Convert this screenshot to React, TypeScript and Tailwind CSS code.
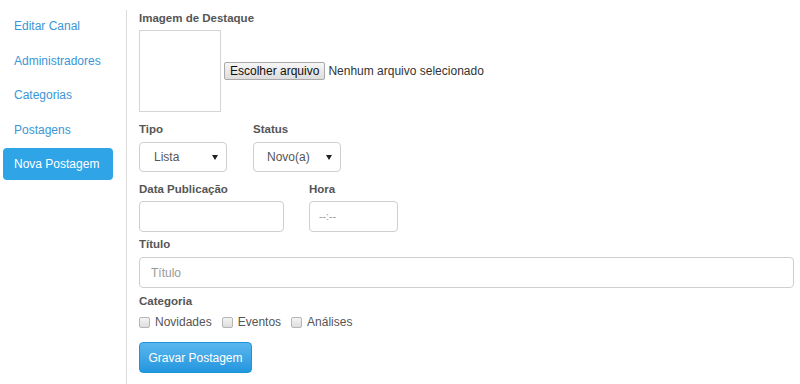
import React from "react";

const links = ["Editar Canal", "Administradores", "Categorias", "Postagens", "Nova Postagem"];

function Caret() {
    return (
        <svg width="6" height="5" viewBox="0 0 6 5" className="ml-auto">
            <path d="M0 0 L6 0 L3 5 Z" fill="#222" />
        </svg>
    );
}

function Label({ children, className = "" }: { children: React.ReactNode; className?: string }) {
    return <div className={`text-[11.5px] leading-[14px] font-bold text-[#555] ${className}`}>{children}</div>;
}

function Check({ label }: { label: string }) {
    return (
        <div className="flex items-center mr-[10px]">
            <span className="w-[11px] h-[11px] rounded-[2px] border border-[#b5b5b5] bg-gradient-to-b from-[#f4f4f4] to-[#dedede]" />
            <span className="ml-[5px] text-[12px] text-[#555]">{label}</span>
        </div>
    );
}

export default function App() {
    return (
        <div className="flex w-[800px] h-[384px] bg-white overflow-hidden" style={{ fontFamily: '"Liberation Sans", Arial, sans-serif' }}>
            <div className="w-[126px] shrink-0 pt-[10px]">
                <div className="ml-[3px] w-[110px] flex flex-col gap-[2.5px]">
                    {links.map((l, i) => (
                        <div
                            key={`nav-${i}`}
                            className={`h-[32px] flex items-center pl-[11px] text-[12px] rounded-[4px] ${i === 4 ? "bg-[#2fa4e7] text-white" : "text-[#3a96d6]"}`}
                        >
                            {l}
                        </div>
                    ))}
                </div>
            </div>
            <div className="w-px bg-[#dcdcdc] mt-[10px] shrink-0" />
            <div className="pl-[12px] pt-[11px] flex-1 pr-[6px]">
                <Label className="mb-[5px]">Imagem de Destaque</Label>
                <div className="flex items-center">
                    <div className="w-[82px] h-[82px] border border-[#d4d4d4]" />
                    <div className="ml-[3px] h-[18px] px-[5px] flex items-center border border-[#a9a9a9] rounded-[2px] bg-gradient-to-b from-[#f6f6f6] to-[#dddddd] text-[12px] text-[#111]">
                        Escolher arquivo
                    </div>
                    <span className="ml-[3px] text-[12px] text-[#333]">Nenhum arquivo selecionado</span>
                </div>

                <div className="flex mt-[10px]">
                    <div className="w-[114px]">
                        <Label className="mb-[6px]">Tipo</Label>
                        <div className="w-[88px] h-[30px] border border-[#cfcfcf] rounded-[4px] flex items-center pl-[14px] pr-[8px] text-[12px] text-[#555]">
                            Lista
                            <Caret />
                        </div>
                    </div>
                    <div>
                        <Label className="mb-[6px]">Status</Label>
                        <div className="w-[88px] h-[30px] border border-[#cfcfcf] rounded-[4px] flex items-center pl-[13px] pr-[8px] text-[12px] text-[#555]">
                            Novo(a)
                            <Caret />
                        </div>
                    </div>
                </div>

                <div className="flex mt-[10px]">
                    <div className="w-[170px]">
                        <Label className="mb-[5px]">Data Publicação</Label>
                        <div className="w-[145px] h-[31px] border border-[#cfcfcf] rounded-[4px]" />
                    </div>
                    <div>
                        <Label className="mb-[5px]">Hora</Label>
                        <div className="w-[89px] h-[31px] border border-[#cfcfcf] rounded-[4px] flex items-center pl-[9px] text-[10.5px] text-[#999]">
                            --:--
                        </div>
                    </div>
                </div>

                <Label className="mt-[5px] mb-[6px]">Título</Label>
                <div className="w-[655px] h-[31px] border border-[#cfcfcf] rounded-[4px] flex items-center pl-[11px] text-[12px] text-[#999]">
                    Título
                </div>

                <Label className="mt-[6px]">Categoria</Label>
                <div className="flex mt-[7px] h-[14px] items-center">
                    <Check label="Novidades" />
                    <Check label="Eventos" />
                    <Check label="Análises" />
                </div>

                <div className="mt-[13px] w-[113px] h-[31px] rounded-[4px] border border-[#1f93d8] bg-gradient-to-b from-[#58b7ee] to-[#2196de] text-white text-[12px] flex items-center justify-center">
                    Gravar Postagem
                </div>
            </div>
        </div>
    );
}
